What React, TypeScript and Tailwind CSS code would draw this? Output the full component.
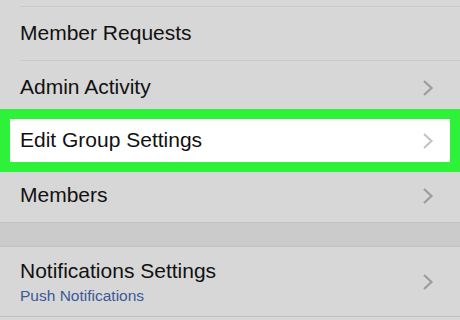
function Chevron({ light = false }: { light?: boolean }) {
  return (
    <svg
      width="12"
      height="16"
      viewBox="0 0 12 16"
      className={light ? 'text-[#c4c4c4]' : 'text-[#9c9c9c]'}
    >
      <polyline points="2,1 9.5,8 2,15" fill="none" stroke="currentColor" strokeWidth="2.2" />
    </svg>
  );
}

function Divider() {
  return <div className="ml-5 h-px bg-[#cbcbcb]" />;
}

export default function App() {
  return (
    <div className="h-[320px] w-[460px] overflow-hidden bg-[#d7d7d7] font-['Liberation_Sans',Arial,sans-serif] text-[#111]">
      <div className="h-[6px]" />
      <Divider />

      <div className="flex h-[53px] items-start pl-5 pt-[13px]">
        <span className="text-[21px] leading-[26px]">Member Requests</span>
      </div>
      <Divider />

      <div className="flex h-[48px] items-start justify-between pl-5 pr-[26px] pt-[13px]">
        <span className="text-[21px] leading-[26px]">Admin Activity</span>
        <div className="pt-[6px]">
          <Chevron />
        </div>
      </div>

      <div className="h-[63px] border-[10px] border-[#2ef23a] bg-white">
        <div className="flex items-start justify-between pl-[10px] pr-4 pt-[8px]">
          <span className="text-[21px] leading-[26px]">Edit Group Settings</span>
          <div className="pt-[6px]">
            <Chevron light />
          </div>
        </div>
      </div>

      <div className="flex h-[50px] items-start justify-between pl-5 pr-[26px] pt-[10px]">
        <span className="text-[21px] leading-[26px]">Members</span>
        <div className="pt-[6px]">
          <Chevron />
        </div>
      </div>

      <div className="h-[25px] border-y border-[#c2c2c2] bg-[#cbcbcb]" />

      <div className="flex h-[70px] items-center justify-between border-b border-[#c2c2c2] pl-5 pr-[26px]">
        <div className="flex flex-col">
          <span className="text-[21px] leading-[26px]">Notifications Settings</span>
          <span className="mt-[3px] text-[15.5px] leading-[18px] text-[#3b5998]">Push Notifications</span>
        </div>
        <Chevron />
      </div>
    </div>
  );
}
